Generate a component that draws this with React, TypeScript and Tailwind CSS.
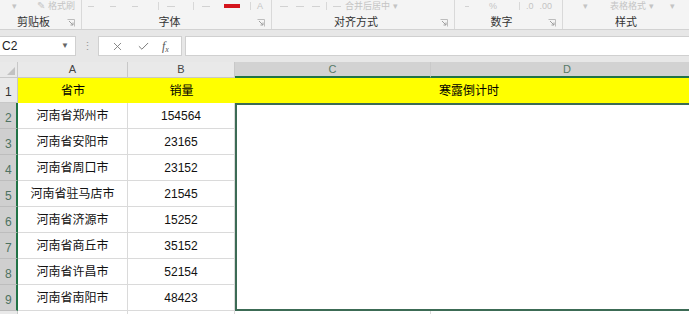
import { Check, X } from "lucide-react";

const font = { fontFamily: '"Liberation Sans", "Noto Sans CJK SC", sans-serif' };

const rows = [
  ["河南省郑州市", "154564"],
  ["河南省安阳市", "23165"],
  ["河南省周口市", "23152"],
  ["河南省驻马店市", "21545"],
  ["河南省济源市", "15252"],
  ["河南省商丘市", "35152"],
  ["河南省许昌市", "52154"],
  ["河南省南阳市", "48423"],
];

function Launcher() {
  return (
    <svg width="8" height="8" viewBox="0 0 8 8" className="mb-[2px]">
      <path d="M0.5 0.5h7v7" fill="none" stroke="#bdbdbd" />
      <path d="M2 2l4 4M6 3.5V6H3.5" fill="none" stroke="#a0a0a0" />
    </svg>
  );
}

function Group({
  w,
  label,
  last,
  children,
}: {
  w: string;
  label: string;
  last?: boolean;
  children?: React.ReactNode;
}) {
  return (
    <div className={`${w} flex flex-col ${last ? "" : "border-r border-[#d9d9d9]"}`}>
      <div className="h-[12px] flex items-center text-[9px] leading-none text-[#c4c4c4] overflow-hidden">
        {children}
      </div>
      <div className={`flex-1 flex items-end ${last ? "" : "pr-[6px]"}`}>
        <span className="flex-1 text-center text-[11px] leading-[14px] text-[#333]">{label}</span>
        {!last && <Launcher />}
      </div>
    </div>
  );
}

function Dash({ w, ml }: { w: string; ml: string }) {
  return <span className={`${w} ${ml} h-[1px] bg-[#d2d2d2]`} />;
}

export default function App() {
  return (
    <div className="w-[689px] h-[314px] overflow-hidden bg-white select-none" style={font}>
      {/* ribbon */}
      <div className="h-[30px] bg-[#f4f4f4] border-b border-[#d2d2d2] flex">
        <Group w="w-[82px]" label="剪贴板">
          <span className="ml-[12px]">▾</span>
          <span className="ml-[20px] text-[10px]">✎</span>
          <span className="ml-[3px]">格式刷</span>
        </Group>
        <Group w="w-[190px]" label="字体">
          <Dash w="w-[6px]" ml="ml-[6px]" />
          <Dash w="w-[6px]" ml="ml-[16px]" />
          <Dash w="w-[6px]" ml="ml-[16px]" />
          <span className="ml-[20px] w-[1px] h-[8px] bg-[#d8d8d8]" />
          <Dash w="w-[8px]" ml="ml-[8px]" />
          <span className="ml-[18px] w-[1px] h-[8px] bg-[#d8d8d8]" />
          <Dash w="w-[8px]" ml="ml-[8px]" />
          <span className="ml-[14px] w-[16px] h-[4px] bg-[#d4141c]" />
          <span className="ml-[10px] w-[1px] h-[8px] bg-[#d8d8d8]" />
          <span className="ml-[6px]">A</span>
        </Group>
        <Group w="w-[183px]" label="对齐方式">
          <Dash w="w-[8px]" ml="ml-[8px]" />
          <Dash w="w-[8px]" ml="ml-[8px]" />
          <Dash w="w-[8px]" ml="ml-[8px]" />
          <span className="ml-[6px] w-[1px] h-[8px] bg-[#d8d8d8]" />
          <Dash w="w-[8px]" ml="ml-[6px]" />
          <span className="ml-[4px]">合并后居中 ▾</span>
        </Group>
        <Group w="w-[108px]" label="数字">
          <Dash w="w-[4px]" ml="ml-[10px]" />
          <span className="ml-[20px]">%</span>
          <span className="ml-[22px] w-[1px] h-[8px] bg-[#d8d8d8]" />
          <span className="ml-[6px]">.0</span>
          <span className="ml-[6px]">.00</span>
        </Group>
        <Group w="w-[126px]" label="样式" last>
          <span className="ml-[20px]">▾</span>
          <span className="ml-[22px]">表格格式 ▾</span>
          <span className="ml-[16px]">▾</span>
        </Group>
      </div>

      {/* formula bar */}
      <div className="h-[32px] bg-[#e7e7e7] pt-[6px]">
        <div className="h-[20px] flex items-stretch">
          <div className="w-[76px] bg-white border border-[#d0d0d0] border-l-0 flex items-center justify-between pl-[2px] pr-[6px] text-[12px] text-[#222]">
            <span>C2</span>
            <span className="text-[8px] text-[#666]">▼</span>
          </div>
          <div className="w-[22px] flex items-center justify-center text-[#999] text-[11px] leading-none">⋮</div>
          <div className="w-[84px] bg-white border border-[#d0d0d0] flex items-center justify-around px-[6px] text-[#777]">
            <X size={13} strokeWidth={1.6} />
            <Check size={13} strokeWidth={1.8} />
            <span className="italic text-[12px] text-[#555]" style={{ fontFamily: '"Liberation Serif", serif' }}>
              f<sub className="text-[8px]">x</sub>
            </span>
          </div>
          <div className="w-[3px]" />
          <div className="flex-1 bg-white border border-[#d0d0d0] border-r-0" />
        </div>
      </div>

      {/* sheet */}
      <div className="grid grid-cols-[18px_110px_107px_196px_272px] grid-rows-[16px_25px_repeat(9,26px)] w-[703px]">
        <div className="bg-[#e9e9e9] border-r border-b border-[#c8c8c8] flex items-end justify-end p-[2px]">
          <svg width="8" height="8" viewBox="0 0 8 8">
            <path d="M8 0V8H0z" fill="#c2c2c2" />
          </svg>
        </div>
        <div className="bg-[#e9e9e9] border-r border-b border-[#c8c8c8] flex items-center justify-center text-[11px] text-[#444]">A</div>
        <div className="bg-[#e9e9e9] border-r border-b border-[#c8c8c8] flex items-center justify-center text-[11px] text-[#444]">B</div>
        <div className="bg-[#d2d2d2] border-r border-[#c9c9c9] border-b-2 border-b-[#217346] flex items-center justify-center text-[11px] text-[#567a68]">C</div>
        <div className="bg-[#d2d2d2] border-b-2 border-b-[#217346] flex items-center justify-center text-[11px] text-[#567a68]">D</div>

        <div className="bg-[#e9e9e9] border-r border-b border-[#c8c8c8] flex items-end pl-[5px] pb-[1px] text-[12px] text-[#333]">1</div>
        <div className="bg-[#ffff00] flex items-center justify-center text-[12px] text-black">省市</div>
        <div className="bg-[#ffff00] flex items-center justify-center text-[12px] text-black">销量</div>
        <div className="col-span-2 bg-[#ffff00] flex items-center justify-center text-[12px] text-black">寒露倒计时</div>

        <div className="col-start-4 col-span-2 row-start-3 row-span-8 bg-white border-2 border-[#3c6b55]" />

        {rows.map(([city, n], i) => (
          <div key={city} className="contents">
            <div className="bg-[#cfcfcf] border-b border-[#bdbdbd] border-r-2 border-r-[#217346] flex items-end pl-[5px] pb-[1px] text-[12px] text-[#4d7261]">
              {i + 2}
            </div>
            <div className="border-r border-b border-[#dadada] flex items-center justify-center text-[12px] text-[#111]">{city}</div>
            <div className="border-r border-b border-[#dadada] flex items-center justify-center text-[12px] text-[#111]">{n}</div>
          </div>
        ))}

        <div className="bg-[#e9e9e9] border-r border-[#c8c8c8]" />
        <div className="border-r border-[#dadada]" />
        <div className="border-r border-[#dadada]" />
        <div className="border-r border-[#dadada]" />
        <div />
      </div>
    </div>
  );
}
